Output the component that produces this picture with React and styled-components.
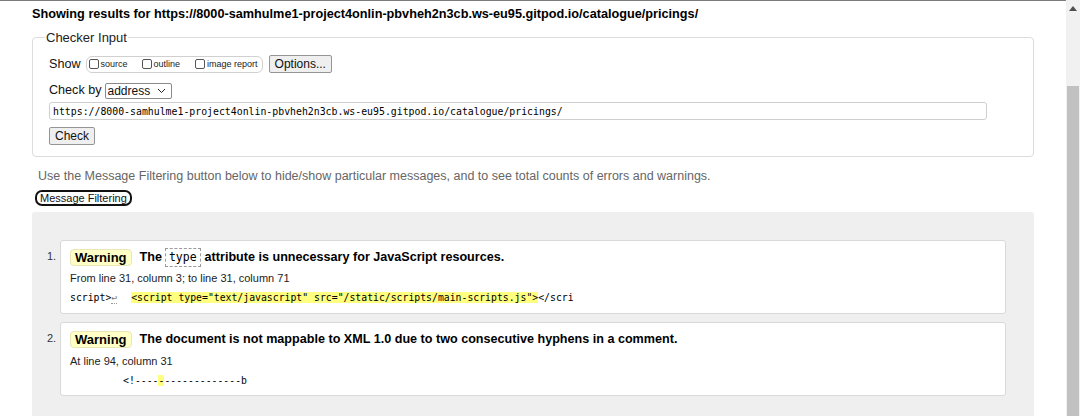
import React from "react";
import styled, { createGlobalStyle } from "styled-components";

const Global = createGlobalStyle`
  html, body { margin: 0; padding: 0; background: #fff; }
  body { font-family: "Liberation Sans", Arial, sans-serif; color: #000; }
`;

const Frame = styled.div`
  width: 1080px;
  height: 416px;
  display: flex;
  overflow: hidden;
`;

const Page = styled.main`
  flex: 1;
  min-width: 0;
  border-top: 1px solid #7c7c7c;
  padding: 0 32px;
  box-sizing: border-box;
`;

const Heading = styled.h2`
  margin: 0;
  padding-top: 5px;
  font-size: 12.7px;
  line-height: 16px;
  font-weight: bold;
  white-space: nowrap;
`;

const Fieldset = styled.fieldset`
  margin: 8px 0 0;
  padding: 10px 16px 11px;
  border: 1px solid #dcdcdc;
  border-radius: 4px;
  min-width: 0;
`;

const Legend = styled.legend`
  padding: 0 1px;
  margin-left: -4px;
  font-size: 13px;
  line-height: 15px;
  color: #222;
`;

const Row = styled.div`
  display: flex;
  align-items: center;
  height: 18px;
  margin-bottom: ${(p) => p.$mb || 0}px;
`;

const Label = styled.span`
  font-size: 12.6px;
  color: #111;
`;

const Group = styled.span`
  display: inline-flex;
  align-items: center;
  height: 15px;
  padding: 0 4px 0 2px;
  border: 1px solid #d0d0d0;
  border-radius: 6px;
  margin-left: 5px;
`;

const CheckItem = styled.label`
  display: inline-flex;
  align-items: center;
  margin-right: ${(p) => p.$mr || 0}px;
  font-size: 9px;
  color: #222;
`;

const Box = styled.input`
  appearance: none;
  width: 10px;
  height: 10px;
  margin: 0 2px 0 0;
  border: 1px solid #555;
  border-radius: 2px;
  background: #fff;
`;

const Button = styled.button`
  height: 18px;
  padding: 0 5px;
  font-family: "Liberation Sans", Arial, sans-serif;
  font-size: 12px;
  color: #111;
  background: #efefef;
  border: 1px solid #959595;
  border-radius: 2px;
  margin-left: ${(p) => p.$ml || 0}px;
`;

const SelectBox = styled.span`
  display: inline-flex;
  align-items: center;
  justify-content: space-between;
  box-sizing: border-box;
  width: 67px;
  height: 16px;
  padding: 0 5px 0 2px;
  margin: 2px 0 0 3px;
  border: 1px solid #8a8a8a;
  border-radius: 2px;
  font-size: 12px;
  color: #111;
`;

const UrlInput = styled.input`
  display: block;
  box-sizing: border-box;
  width: 938px;
  height: 18px;
  margin: 3px 0 6px;
  padding: 0 3px;
  border: 1px solid #cfcfcf;
  border-radius: 3px;
  font-family: "DejaVu Sans Mono", "Liberation Mono", monospace;
  font-size: 9.85px;
  color: #000;
`;

const Note = styled.p`
  margin: 12px 0 0 6px;
  font-size: 12.5px;
  line-height: 15px;
  color: #666;
  white-space: nowrap;
`;

const FilterButton = styled.button`
  display: block;
  height: 16px;
  margin: 6px 0 0 3px;
  padding: 0 3px;
  background: #fff;
  border: 2px solid #111;
  border-radius: 7px;
  font-family: "Liberation Sans", Arial, sans-serif;
  font-size: 11px;
  line-height: 12px;
  color: #111;
`;

const Results = styled.ol`
  margin: 6px 0 0;
  padding: 28px 28px 30px 28px;
  background: #efefef;
  border-radius: 3px 3px 0 0;
  list-style: none;
  display: flex;
  flex-direction: column;
  gap: 8px;
`;

const Item = styled.li`
  display: flex;
  align-items: flex-start;
`;

const Num = styled.span`
  width: 0;
  position: relative;
  left: -13px;
  top: 10px;
  font-size: 11px;
  color: #333;
  white-space: nowrap;
`;

const Card = styled.div`
  flex: 1;
  box-sizing: border-box;
  height: 74px;
  padding: 7px 9px 0;
  background: #fff;
  border: 1px solid #d9d9d9;
  border-radius: 3px;
`;

const Title = styled.p`
  margin: 0;
  display: flex;
  align-items: center;
  font-size: 12.6px;
  font-weight: bold;
  line-height: 19px;
  white-space: pre;
`;

const Badge = styled.strong`
  box-sizing: border-box;
  height: 17px;
  padding: 0 4px;
  margin-right: 8px;
  font-size: 13px;
  background: #ffffc6;
  border: 1px solid #ebe6b6;
  border-radius: 4px;
  line-height: 15px;
`;

const InlineCode = styled.code`
  font-family: "DejaVu Sans Mono", "Liberation Mono", monospace;
  font-weight: normal;
  font-size: 11.5px;
  padding: 1px 3px;
  margin: 0 4px 0 3px;
  border: 1px dashed #9a9a9a;
  line-height: 15px;
`;

const Location = styled.p`
  margin: ${(p) => p.$mt || 4}px 0 0;
  font-size: 11px;
  line-height: 14px;
  color: #222;
`;

const Extract = styled.pre`
  margin: 6px 0 0;
  font-family: "DejaVu Sans Mono", "Liberation Mono", monospace;
  font-size: 9.8px;
  line-height: 14px;
  color: #000;
`;

const Mark = styled.mark`
  background: #ffff80;
  color: #000;
`;

const Lf = styled.span`
  color: #777;
  border-bottom: 1px dotted #999;
  margin-right: 14px;
`;

const Scrollbar = styled.div`
  width: 14px;
  flex-shrink: 0;
  display: flex;
  flex-direction: column;
  background: #f1f1f1;
`;

const ArrowBtn = styled.div`
  height: 71px;
  display: flex;
  justify-content: center;
  padding-top: 6px;
  box-sizing: border-box;
`;

const Thumb = styled.div`
  flex: 1;
  margin: 15px 1px 0;
  background: #c1c1c1;
`;

export default function App() {
  const url =
    "https://8000-samhulme1-project4onlin-pbvheh2n3cb.ws-eu95.gitpod.io/catalogue/pricings/";
  return (
    <Frame>
      <Global />
      <Page>
        <Heading>Showing results for {url}</Heading>
        <Fieldset>
          <Legend>Checker Input</Legend>
          <Row $mb={8}>
            <Label>Show</Label>
            <Group>
              <CheckItem $mr={14}>
                <Box type="checkbox" />source
              </CheckItem>
              <CheckItem $mr={15}>
                <Box type="checkbox" />outline
              </CheckItem>
              <CheckItem>
                <Box type="checkbox" />image report
              </CheckItem>
            </Group>
            <Button $ml={6}>Options...</Button>
          </Row>
          <Row>
            <Label>Check by</Label>
            <SelectBox>
              address
              <svg width="9" height="6" viewBox="0 0 9 6">
                <path d="M1 1 L4.5 4.5 L8 1" fill="none" stroke="#222" strokeWidth="1" />
              </svg>
            </SelectBox>
          </Row>
          <UrlInput readOnly value={url} />
          <Button>Check</Button>
        </Fieldset>
        <Note>
          Use the Message Filtering button below to hide/show particular messages, and to see total counts of errors and warnings.
        </Note>
        <FilterButton>Message Filtering</FilterButton>
        <Results>
          <Item>
            <Num>1.</Num>
            <Card>
              <Title>
                <Badge>Warning</Badge>The
                <InlineCode>type</InlineCode>attribute is unnecessary for JavaScript resources.
              </Title>
              <Location>From line 31, column 3; to line 31, column 71</Location>
              <Extract>
                script&gt;<Lf>↩</Lf>
                <Mark>&lt;script type="text/javascript" src="/static/scripts/main-scripts.js"&gt;</Mark>
                &lt;/scri
              </Extract>
            </Card>
          </Item>
          <Item>
            <Num>2.</Num>
            <Card>
              <Title>
                <Badge>Warning</Badge>The document is not mappable to XML 1.0 due to two consecutive hyphens in a comment.
              </Title>
              <Location $mt={5}>At line 94, column 31</Location>
              <Extract>
                {"         <!----"}
                <Mark>-</Mark>
                {"-------------b"}
              </Extract>
            </Card>
          </Item>
        </Results>
      </Page>
      <Scrollbar>
        <ArrowBtn>
          <svg width="8" height="5" viewBox="0 0 8 5">
            <path d="M0 5 L4 0 L8 5 Z" fill="#505050" />
          </svg>
        </ArrowBtn>
        <Thumb />
      </Scrollbar>
    </Frame>
  );
}
